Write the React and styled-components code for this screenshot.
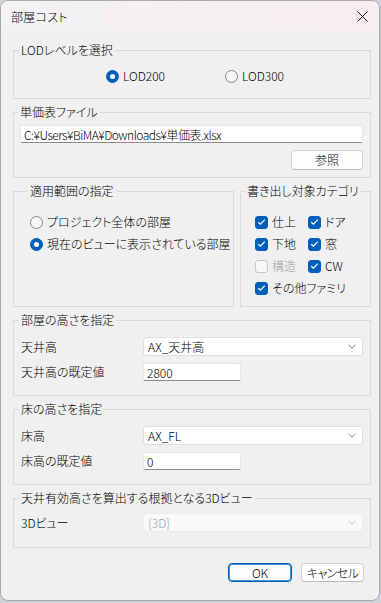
import React from "react";
import styled, { createGlobalStyle } from "styled-components";

const Global = createGlobalStyle`
  html, body { margin: 0; padding: 0; }
  body {
    background: #cfd3d6;
    font-family: "Noto Sans CJK JP", "Noto Sans", sans-serif;
    font-size: 12px;
    font-weight: 300;
    color: #000;
  }
  * { box-sizing: border-box; }
`;

const Window = styled.div`
  width: 380px;
  height: 601px;
  border: 1px solid #a9a9a9;
  border-radius: 8px;
  overflow: hidden;
  background: #f0f0f0;
  display: flex;
  flex-direction: column;
  font-feature-settings: "palt";
`;

const TitleBar = styled.div`
  height: 30px;
  flex: none;
  display: flex;
  align-items: center;
  justify-content: space-between;
  padding: 0 8px 0 10px;
  background: linear-gradient(90deg, #f3f2f5 0%, #f6f0f3 60%, #f9eef0 100%);
`;

const Title = styled.span`
  font-size: 12px;
  line-height: 14px;
  margin-top: 2px;
  letter-spacing: 0.3px;
`;

const CloseButton = styled.div`
  width: 14px;
  height: 14px;
  display: flex;
  align-items: center;
  justify-content: center;
  margin-right: 2px;
`;

const Body = styled.div`
  flex: 1;
  display: flex;
  flex-direction: column;
  gap: 6px;
  padding: 12px 8px 0 12px;
`;

const Group = styled.fieldset`
  margin: 0;
  min-width: 0;
  border: 1px solid #dadada;
  padding: ${(p) => p.$pt}px ${(p) => p.$pr ?? 7}px ${(p) => p.$pb}px ${(p) => p.$pl ?? 7}px;
  ${(p) => (p.$width ? `width: ${p.$width}px; flex: none;` : "")}
  ${(p) => (p.$grow ? "flex: 1;" : "")}
`;

const Legend = styled.legend`
  padding: 0 2px;
  margin-left: -2px;
  font-size: 12px;
  line-height: 14px;
`;

const LodRow = styled.div`
  display: flex;
  padding-left: 85px;
`;

const RadioItem = styled.div`
  display: flex;
  align-items: center;
  gap: 4px;
  height: 16px;
  ${(p) => (p.$width ? `width: ${p.$width}px;` : "")}
  line-height: 16px;
  white-space: nowrap;
`;

const RadioCircle = styled.span`
  width: 13px;
  height: 13px;
  flex: none;
  border-radius: 50%;
  ${(p) =>
    p.$checked
      ? `background: #005fb8; border: 1px solid #005fb8; display:flex; align-items:center; justify-content:center;
         &::after { content: ""; width: 5px; height: 5px; border-radius: 50%; background: #fff; }`
      : `background: #f6f6f6; border: 1px solid #858585;`}
`;

const TextInput = styled.div`
  height: ${(p) => p.$h ?? 18}px;
  width: ${(p) => (p.$w ? `${p.$w}px` : "100%")};
  background: #fff;
  border: 1px solid #e6e6e6;
  border-bottom: 1px solid #8a8a8a;
  border-radius: 2px;
  padding: 0 3px;
  display: flex;
  align-items: center;
  font-size: 12px;
  letter-spacing: ${(p) => p.$ls ?? 0}px;
  white-space: nowrap;
  overflow: hidden;
`;

const RightRow = styled.div`
  display: flex;
  justify-content: flex-end;
  gap: ${(p) => p.$gap ?? 0}px;
  margin-top: ${(p) => p.$mt ?? 0}px;
  padding-right: ${(p) => p.$pr ?? 0}px;
`;

const Button = styled.div`
  width: ${(p) => p.$w}px;
  height: ${(p) => p.$h}px;
  background: #fdfdfd;
  border: 1px solid ${(p) => (p.$primary ? "#005fb8" : "#d3d3d3")};
  ${(p) => (p.$primary ? "box-shadow: inset 0 0 0 1px #4a90d0;" : "border-bottom-color: #b8b8b8;")}
  border-radius: 4px;
  display: flex;
  align-items: center;
  justify-content: center;
  font-size: 12px;
  line-height: 14px;
  letter-spacing: ${(p) => p.$ls ?? 0}px;
`;

const SplitRow = styled.div`
  display: flex;
  gap: 6px;
`;

const RadioStack = styled.div`
  display: flex;
  flex-direction: column;
  gap: 6px;
`;

const CheckGrid = styled.div`
  display: grid;
  grid-template-columns: 53px auto;
  row-gap: 6px;
  margin-left: 8px;
`;

const CheckItem = styled.div`
  display: flex;
  align-items: center;
  gap: 4px;
  height: 16px;
  line-height: 16px;
  white-space: nowrap;
  color: ${(p) => (p.$disabled ? "#a0a0a0" : "#000")};
  ${(p) => (p.$span ? "grid-column: 1 / span 2;" : "")}
`;

const Box = styled.span`
  width: 13px;
  height: 13px;
  flex: none;
  border-radius: 3px;
  display: flex;
  align-items: center;
  justify-content: center;
  ${(p) =>
    p.$checked
      ? "background: #005fb8; border: 1px solid #005fb8;"
      : "background: #f7f7f7; border: 1px solid #c5c5c5;"}
`;

const FieldRows = styled.div`
  display: flex;
  flex-direction: column;
  gap: 7px;
`;

const FieldRow = styled.div`
  display: flex;
  align-items: center;
`;

const FieldLabel = styled.span`
  width: 122px;
  flex: none;
  line-height: 16px;
`;

const Select = styled.div`
  flex: 1;
  height: 19px;
  background: ${(p) => (p.$disabled ? "#f9f9f9" : "#fff")};
  border: 1px solid ${(p) => (p.$disabled ? "#ececec" : "#dedede")};
  border-radius: 3px;
  display: flex;
  align-items: center;
  justify-content: space-between;
  padding: 0 6px 0 4px;
  color: ${(p) => (p.$disabled ? "#a3a3a3" : "#000")};
  font-size: 12px;
`;

const Check = () => (
  <svg width="9" height="8" viewBox="0 0 9 8">
    <path d="M1.2 4.2 L3.4 6.2 L7.8 1.6" fill="none" stroke="#fff" strokeWidth="1.2" />
  </svg>
);

const Chevron = ({ color = "#7a7a7a" }) => (
  <svg width="8" height="5" viewBox="0 0 8 5">
    <path d="M0.5 0.8 L4 4.2 L7.5 0.8" fill="none" stroke={color} strokeWidth="1" />
  </svg>
);

const Radio = ({ checked, children, width }) => (
  <RadioItem $width={width}>
    <RadioCircle $checked={checked} />
    <span>{children}</span>
  </RadioItem>
);

const CheckBox = ({ checked, disabled, span, children }) => (
  <CheckItem $disabled={disabled} $span={span}>
    <Box $checked={checked}>{checked && <Check />}</Box>
    <span>{children}</span>
  </CheckItem>
);

export default function App() {
  return (
    <>
      <Global />
      <Window>
        <TitleBar>
          <Title>部屋コスト</Title>
          <CloseButton>
            <svg width="11" height="11" viewBox="0 0 11 11">
              <path d="M0.5 0.5 L10.5 10.5 M10.5 0.5 L0.5 10.5" stroke="#1a1a1a" strokeWidth="1" />
            </svg>
          </CloseButton>
        </TitleBar>
        <Body>
          <Group $pt={11} $pb={14}>
            <Legend>LODレベルを選択</Legend>
            <LodRow>
              <Radio checked width={119}>LOD200</Radio>
              <Radio width={119}>LOD300</Radio>
            </LodRow>
          </Group>

          <Group $pt={6} $pb={7} $pl={6} $pr={7}>
            <Legend>単価表ファイル</Legend>
            <TextInput $ls={-0.5}>C:¥Users¥BiMA¥Downloads¥単価表.xlsx</TextInput>
            <RightRow $mt={7}>
              <Button $w={72} $h={20}>参照</Button>
            </RightRow>
          </Group>

          <SplitRow>
            <Group $width={221} $pt={16} $pb={10} $pl={16}>
              <Legend>適用範囲の指定</Legend>
              <RadioStack>
                <Radio>プロジェクト全体の部屋</Radio>
                <Radio checked>現在のビューに表示されている部屋</Radio>
              </RadioStack>
            </Group>
            <Group $grow $pt={16} $pb={10} $pl={6}>
              <Legend>書き出し対象カテゴリ</Legend>
              <CheckGrid>
                <CheckBox checked>仕上</CheckBox>
                <CheckBox checked>ドア</CheckBox>
                <CheckBox checked>下地</CheckBox>
                <CheckBox checked>窓</CheckBox>
                <CheckBox disabled>構造</CheckBox>
                <CheckBox checked>CW</CheckBox>
                <CheckBox checked span>その他ファミリ</CheckBox>
              </CheckGrid>
            </Group>
          </SplitRow>

          <Group $pt={10} $pb={14}>
            <Legend>部屋の高さを指定</Legend>
            <FieldRows>
              <FieldRow>
                <FieldLabel>天井高</FieldLabel>
                <Select>
                  <span>AX_天井高</span>
                  <Chevron />
                </Select>
              </FieldRow>
              <FieldRow>
                <FieldLabel>天井高の既定値</FieldLabel>
                <TextInput $w={98} $h={18}>2800</TextInput>
              </FieldRow>
            </FieldRows>
          </Group>

          <Group $pt={10} $pb={14}>
            <Legend>床の高さを指定</Legend>
            <FieldRows>
              <FieldRow>
                <FieldLabel>床高</FieldLabel>
                <Select>
                  <span>AX_FL</span>
                  <Chevron />
                </Select>
              </FieldRow>
              <FieldRow>
                <FieldLabel>床高の既定値</FieldLabel>
                <TextInput $w={98} $h={18}>0</TextInput>
              </FieldRow>
            </FieldRows>
          </Group>

          <Group $pt={8} $pb={15}>
            <Legend>天井有効高さを算出する根拠となる3Dビュー</Legend>
            <FieldRow>
              <FieldLabel>3Dビュー</FieldLabel>
              <Select $disabled>
                <span>{"{3D}"}</span>
                <Chevron color="#c2c2c2" />
              </Select>
            </FieldRow>
          </Group>

          <RightRow $mt={9} $gap={9} $pr={7}>
            <Button $primary $w={64} $h={19}>OK</Button>
            <Button $w={63} $h={19} $ls={-0.6}>キャンセル</Button>
          </RightRow>
        </Body>
      </Window>
    </>
  );
}
